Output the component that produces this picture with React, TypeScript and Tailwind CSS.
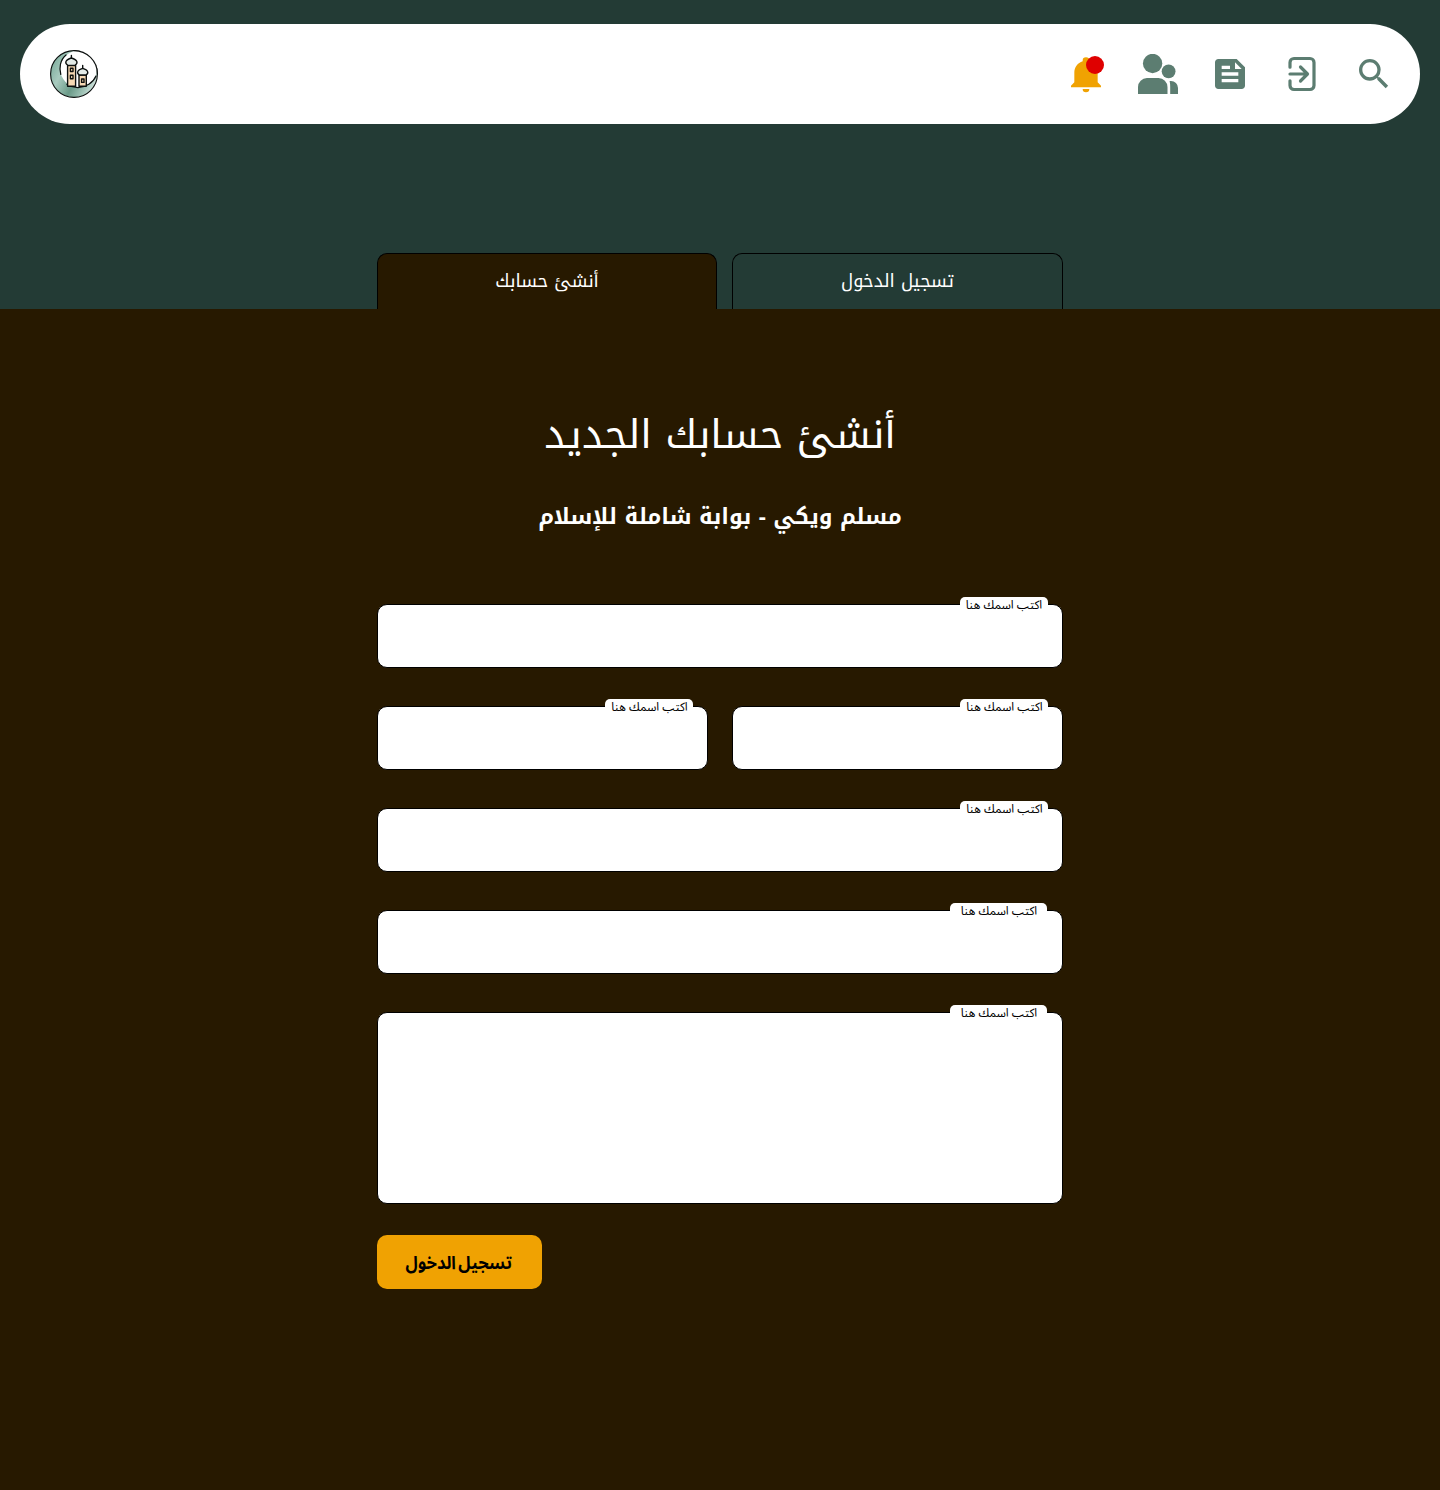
import React from "react";

const kufi = "font-['Noto_Kufi_Arabic','Noto_Sans_Arabic','DejaVu_Sans',sans-serif]";
const sans = "font-['Noto_Sans_Arabic','DejaVu_Sans',sans-serif]";

function Logo() {
  return (
    <svg viewBox="0 0 48 48" className="size-12" fill="none" stroke="#0b0f0e" strokeLinecap="round" strokeLinejoin="round">
      <defs>
        <linearGradient id="moon" x1="0" y1="0.3" x2="1" y2="0.8">
          <stop offset="0" stopColor="#7fae9e" />
          <stop offset="0.25" stopColor="#a9cbbf" />
          <stop offset="0.55" stopColor="#6a9a88" />
          <stop offset="0.8" stopColor="#a3c5b9" />
          <stop offset="1" stopColor="#e6f1ed" />
        </linearGradient>
      </defs>
      <circle cx="24" cy="24" r="23.400" fill="url(#moon)" strokeWidth="1.100" />
      <circle cx="28.500" cy="19" r="18.300" fill="#fff" stroke="none" />
      <path d="M24 .6A23.400 23.400 0 0 1 47.400 24" strokeWidth="1.100" />
      <path d="M10.800 24.500C9 18 10 10 16 5M17 34.500c4 2.500 7 3.100 11 3.100 8-.2 15-4.600 18-11.500" strokeWidth="1.200" />
      <path d="M17.600 15.500h8v20.800h-8zM29 25h7.300v11.300H29z" fill="#f7d9b4" strokeWidth="1.400" />
      <path d="M17.800 15.300c-3.300-2-2.800-5.500 3.600-7.300 6.400 1.800 6.900 5.300 3.600 7.300zM29.400 25c-3-1.800-2.500-5 3.300-6.700 5.800 1.700 6.300 4.900 3.300 6.700z" fill="#e3ebe8" strokeWidth="1.300" />
      <path d="M21.400 8V5.500M32.700 18.300v-2.800" strokeWidth="1.400" />
      <path d="M20.400 18.200H23v3.300h-2.600zM20.400 25.200H23v3.600h-2.600zM31.600 29h2.400v3.400h-2.400z" strokeWidth="1.400" />
    </svg>
  );
}

function BellIcon() {
  return (
    <svg viewBox="0 0 24 24" className="size-10" fill="#f0a202">
      <path d="M21 19v1H3v-1l2-2v-6c0-3.100 2.030-5.830 5-6.710V4a2 2 0 0 1 4 0v.29c2.970.88 5 3.610 5 6.710v6l2 2m-7 2a2 2 0 0 1-4 0" />
    </svg>
  );
}

function PeopleIcon() {
  return (
    <svg viewBox="0 0 40 40" className="size-10" fill="#5c7d71">
      <circle cx="14.600" cy="9.500" r="9.700" />
      <circle cx="30.600" cy="17.300" r="6.900" />
      <path d="M0 40v-7a9 9 0 0 1 9-9h11.500a9 9 0 0 1 9 9v7zM32.200 40v-7c0-2.300-.1-4.200-.6-6h1.400a7 7 0 0 1 7 7v6z" />
    </svg>
  );
}

function FeedIcon() {
  return (
    <svg viewBox="0 0 24 24" className="size-10" fill="#5c7d71">
      <path d="M16 3H5c-1.100 0-2 .9-2 2v14c0 1.100.9 2 2 2h14c1.100 0 2-.9 2-2V8l-5-5zM7 7h5v2H7V7zm10 10H7v-2h10v2zm0-4H7v-2h10v2zm-2-4V5l4 4h-4z" />
    </svg>
  );
}

function EnterIcon() {
  return (
    <svg viewBox="0 0 40 40" className="size-10" fill="none" stroke="#5c7d71" strokeWidth="3.200" strokeLinecap="round" strokeLinejoin="round">
      <path d="M8 13.200V8.500a4 4 0 0 1 4-4h16a4 4 0 0 1 4 4v23a4 4 0 0 1-4 4H12a4 4 0 0 1-4-4V26.800" />
      <path d="M8 20h17M18.500 13l7 7-7 7" />
    </svg>
  );
}

function SearchIcon() {
  return (
    <svg viewBox="0 0 24 24" className="size-10" fill="#5c7d71">
      <path d="M15.500 14h-.79l-.28-.27A6.471 6.471 0 0 0 16 9.500 6.500 6.500 0 1 0 9.500 16c1.610 0 3.090-.59 4.230-1.570l.27.28v.79l5 4.990L20.490 19l-4.990-5zm-6 0C7.010 14 5 11.990 5 9.500S7.010 5 9.500 5 14 7.010 14 9.500 11.990 14 9.500 14z" />
    </svg>
  );
}

function Field({ box = "h-16", label = "right-3.5 w-[88px] pl-px" }: { box?: string; label?: string }) {
  return (
    <div className={`relative w-full rounded-[10px] border border-black bg-white ${box}`}>
      <label dir="rtl" className={`absolute -top-2 flex h-[18px] items-center justify-center whitespace-nowrap rounded-[5px] bg-white text-[12px] leading-[18px] text-black ${sans} ${label}`}>
        اكتب اسمك هنا
      </label>
    </div>
  );
}

export default function App() {
  return (
    <div className={`min-h-[1490px] w-full bg-[#271900] ${kufi}`}>
      <header className="flex h-[309px] flex-col justify-between bg-[#233b35] pt-6">
        <nav className="mx-5 flex h-[100px] items-center justify-between rounded-full bg-white pl-[30px] pr-[26px]">
          <Logo />
          <div className="flex items-center gap-8">
            <div className="relative">
              <BellIcon />
              <span className="absolute right-[2px] top-[2px] size-[18px] rounded-full bg-[#df0000]" />
            </div>
            <PeopleIcon />
            <FeedIcon />
            <EnterIcon />
            <SearchIcon />
          </div>
        </nav>
        <div className="mx-auto flex h-14 w-[686px] justify-between text-[18px] text-white">
          <button dir="rtl" className="w-[340px] rounded-t-[10px] border border-b-0 border-black bg-[#271900]">أنشئ حسابك</button>
          <button dir="rtl" className="w-[331px] rounded-t-[10px] border border-b-0 border-black">تسجيل الدخول</button>
        </div>
      </header>
      <main className="mx-auto flex w-[686px] flex-col items-center">
        <h1 dir="rtl" className="mt-[90px] h-[72px] whitespace-nowrap text-[40px] leading-[72px] text-white">أنشئ حسابك الجديد</h1>
        <h2 dir="rtl" className="mt-[26px] h-10 whitespace-nowrap text-[22px] font-bold leading-10 text-white">مسلم ويكي - بوابة شاملة للإسلام</h2>
        <form className="mt-[67px] flex w-full flex-col gap-[38px]">
          <Field label="right-[14.5px] w-[88px] pl-px" />
          <div className="flex gap-6">
            <Field />
            <Field />
          </div>
          <Field />
          <Field label="right-[15.5px] w-[97px] pl-0.5" />
          <Field box="h-48" label="right-[15.5px] w-[97px] pl-0.5" />
        </form>
        <button dir="rtl" className={`mt-[31px] h-[54px] w-[165px] self-start rounded-[10px] bg-[#f0a202] pt-0.5 pr-px text-[18px] font-bold text-black ${sans}`}>
          <span className="inline-block scale-x-[0.92] whitespace-nowrap [word-spacing:-2px]">تسجيل الدخول</span>
        </button>
      </main>
    </div>
  );
}
